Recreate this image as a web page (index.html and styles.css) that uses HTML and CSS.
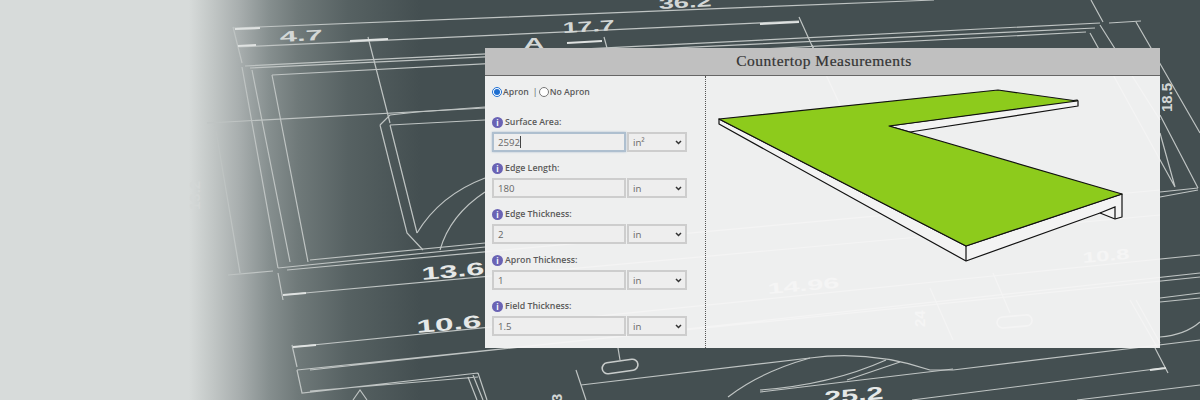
FILE: index.html
```html
<!DOCTYPE html>
<html lang="en">
<head>
    <meta charset="UTF-8">
    <meta name="viewport" content="width=device-width, initial-scale=1.0">
    <title>Countertop Measurements</title>
    <link rel="stylesheet" href="styles.css">
</head>
<body>
    <div class="hero">
        <!-- Blueprint drawing behind the panel -->
        <svg class="blueprint" viewBox="0 0 1200 400" aria-hidden="true">
            <defs>
                <linearGradient id="fade" gradientUnits="userSpaceOnUse" x1="0" y1="0" x2="420" y2="0">
                    <stop offset="0.45" stop-color="#d7dbda"/>
                    <stop offset="0.51" stop-color="#c0c5c4"/>
                    <stop offset="0.57" stop-color="#a8aeae"/>
                    <stop offset="0.64" stop-color="#868f8f"/>
                    <stop offset="0.71" stop-color="#6f7979"/>
                    <stop offset="0.83" stop-color="#566162"/>
                    <stop offset="1" stop-color="#444f51"/>
                </linearGradient>
            </defs>
            <rect class="bp-fade" width="420" height="400"/>

            <g class="bp-lines">
                <!-- top dimensions -->
                <path d="M233 28 L934 0 M238 47 L799 21 M233 27 L242 63 M799 17 L813 48"/>
                <path d="M368 37 L390 123 M604 37 L607 48 M1091 0 L1103 22 M1109 23 L1141 21"/>
                <!-- long top edge of the part -->
                <path d="M245 66 L1100 23 M250 68 L1095 28 M272 75 L1086 32"/>
                <path d="M1100 25 L1160 120 M1090 33 L1175 187 M1136 22 L1200 133 M1160 115 L1198 188 M1160 133 L1175 187"/>
                <path d="M1198 188 L1160 192 M1198 190 L1160 197"/>
                <!-- left side -->
                <path d="M242 67 L278 268 M252 70 L290 262 M272 75 L308 262"/>
                <path d="M207 123 L485 108 M215 125 L240 273 M228 275 L273 271"/>
                <!-- slot and curves -->
                <path d="M380 125 L407 233 L423 250 M390 125 L417 233 M380 125 L390 115 L417 112 L485 107 M390 125 L485 120"/>
                <path d="M417 233 Q440 195 485 178 M440 250 Q450 215 485 192"/>
                <!-- bottom edges and dimensions -->
                <path d="M278 268 L485 247 M310 260 L485 243 M287 270 L1160 190 M278 273 L283 300 M283 295 L1160 215"/>
                <path d="M292 345 L297 367 M293 347 L1200 255 M297 370 L1200 277 M310 370 L1200 273"/>
                <path d="M297 370 L302 393 L478 373 M310 391 L478 377 M468 377 L477 400 M473 375 L483 400 M478 373 L487 400 M353 400 L360 390 L367 400"/>
                <path d="M1160 298 L1200 293 M1160 302 L1200 298"/>
                <path d="M581 385 L810 358 Q870 350 930 370 L953 370 L1200 340 M576 370 L586 400 M618 348 L620 360"/>
                <path d="M728 397 Q760 372 810 358 M760 390 Q830 385 886 360 M847 380 L900 362 M760 392 L953 369 M912 400 L1163 368"/>
                <path d="M1160 337 Q1185 335 1200 322 M1155 348 L1168 373 M1077 400 L1200 385"/>
                <path class="bp-thick" d="M260 28 L235 29 M238 46 L256 45 M350 41 L388 39 M1150 370 L1166 368 M283 295 L306 293 M293 347 L316 345 M567 43 L602 41 M760 24 L799 22"/>
                <!-- only seen through the panel -->
                <path d="M812 45 L887 205 M930 288 L953 340 M993 273 L1010 313 M1130 300 L1157 347 M1136 300 L1160 343"/>
            </g>
            <rect class="bp-slot" x="602" y="361" width="36" height="11" rx="5.5" transform="rotate(-8 620 366)"/>
            <rect class="bp-slot" x="997" y="316" width="35" height="11" rx="5.5" transform="rotate(-5 1014 321)"/>

            <g class="bp-text">
                <text x="280" y="42" textLength="43" lengthAdjust="spacingAndGlyphs" transform="rotate(-3 280 42)">4.7</text>
                <text x="563" y="33" textLength="52" lengthAdjust="spacingAndGlyphs" transform="rotate(-3 563 33)">17.7</text>
                <text x="659" y="9" textLength="53" lengthAdjust="spacingAndGlyphs" transform="rotate(-3 659 9)">36.2</text>
                <text x="524" y="48" textLength="20" lengthAdjust="spacingAndGlyphs">A</text>
                <text x="422" y="280" class="bp-big" textLength="63" lengthAdjust="spacingAndGlyphs" transform="rotate(-5 422 280)">13.6</text>
                <text x="417" y="333" class="bp-big" textLength="65" lengthAdjust="spacingAndGlyphs" transform="rotate(-5 417 333)">10.6</text>
                <text x="825" y="404" class="bp-big" textLength="59" lengthAdjust="spacingAndGlyphs" transform="rotate(-5 825 404)">25.2</text>
                <text x="1172" y="112" transform="rotate(-90 1172 112)">18.5</text>
                <text x="562" y="402" transform="rotate(-90 562 402)">3</text>
                <text x="200" y="210" transform="rotate(-90 200 210)">13.2</text>
                <text x="768" y="294" textLength="72" lengthAdjust="spacingAndGlyphs" transform="rotate(-5 768 294)">14.96</text>
                <text x="1083" y="263" textLength="47" lengthAdjust="spacingAndGlyphs" transform="rotate(-5 1083 263)">10.8</text>
                <text x="925" y="327" transform="rotate(-90 925 327)">24</text>
                <text x="767" y="132" textLength="40" lengthAdjust="spacingAndGlyphs" transform="rotate(-5 767 132)">Ø2</text>
            </g>
        </svg>

        <div class="panel">
            <h2 class="panel-title">Countertop Measurements</h2>
            <div class="panel-body">
                <form class="fields">
                    <div class="apron">
                        <label><input type="radio" name="apron" checked> Apron</label>
                        <span class="sep">|</span>
                        <label><input type="radio" name="apron"> No Apron</label>
                    </div>

                    <div class="field">
                        <div class="field-label"><span class="info">i</span>Surface Area:</div>
                        <div class="field-row">
                            <input class="num num-active" type="text" value="2592">
                            <span class="caret"></span>
                            <select class="unit"><option>in²</option></select>
                        </div>
                    </div>
                    <div class="field">
                        <div class="field-label"><span class="info">i</span>Edge Length:</div>
                        <div class="field-row">
                            <input class="num" type="text" value="180">
                            <select class="unit"><option>in</option></select>
                        </div>
                    </div>
                    <div class="field">
                        <div class="field-label"><span class="info">i</span>Edge Thickness:</div>
                        <div class="field-row">
                            <input class="num" type="text" value="2">
                            <select class="unit"><option>in</option></select>
                        </div>
                    </div>
                    <div class="field">
                        <div class="field-label"><span class="info">i</span>Apron Thickness:</div>
                        <div class="field-row">
                            <input class="num" type="text" value="1">
                            <select class="unit"><option>in</option></select>
                        </div>
                    </div>
                    <div class="field">
                        <div class="field-label"><span class="info">i</span>Field Thickness:</div>
                        <div class="field-row">
                            <input class="num" type="text" value="1.5">
                            <select class="unit"><option>in</option></select>
                        </div>
                    </div>
                </form>

                <div class="preview">
                    <!-- viewBox is in page pixels so the points read off the layout directly -->
                    <svg class="counter" viewBox="706 76 454 272" aria-label="Countertop preview">
                        <path class="side" d="M719 119 L719 124 L966 261 L1100 213 L1115 219 L1122 217 L1122 194 L966 246 Z"/>
                        <path class="side" d="M1077 100 L1078 101 L1078 106 L910 132 L889 126 Z"/>
                        <path class="top" d="M719 119 L998 90 L1077 101 L889 126 L1122 194 L966 246 Z"/>
                        <path class="edge" d="M966 246 L966 261 M1100 213 L1115 207 L1115 219"/>
                    </svg>
                </div>
            </div>
        </div>
    </div>
</body>
</html>
```

FILE: styles.css
```css
* {
    box-sizing: border-box;
}

body {
    margin: 0;
    background: #444f51;
    font-family: "Open Sans", Arial, sans-serif;
    color: #555;
}

.hero {
    position: relative;
    width: 1200px;
    height: 400px;
    overflow: hidden;
    padding: 48px 40px 0 485px;
}

.blueprint {
    position: absolute;
    top: 0;
    left: 0;
    width: 1200px;
    height: 400px;
}

.bp-fade {
    fill: url(#fade);
}

.bp-lines {
    filter: blur(0.35px);
}

.bp-lines path {
    fill: none;
    stroke: #bfc4c3;
    stroke-width: 1.2;
}

.bp-lines .bp-thick {
    stroke: #dfe2e1;
    stroke-width: 2.2;
}

.bp-slot {
    fill: none;
    stroke: #c8cccb;
    stroke-width: 1.6;
}

.bp-text text {
    font-family: "Liberation Sans", Arial, sans-serif;
    font-weight: bold;
    font-size: 15px;
    fill: #d3d7d6;
}

.bp-text .bp-big {
    font-size: 18px;
    fill: #e6e8e7;
}

.panel {
    position: relative;
    width: 675px;
    height: 300px;
    background: rgba(246, 246, 246, 0.96);
}

.panel-title {
    margin: 0;
    height: 28px;
    padding-left: 3px;
    line-height: 26px;
    background: #c0c0c0;
    border-bottom: 1px solid #666;
    text-align: center;
    font-family: "Liberation Serif", serif;
    font-size: 15.5px;
    font-weight: normal;
    letter-spacing: 0.5px;
    color: #333;
    -webkit-text-stroke: 0.2px #333;
}

.panel-body {
    display: flex;
    height: 272px;
}

.fields {
    width: 221px;
    padding: 8px 17px 0 7px;
    border-right: 1px dotted #555;
}

.apron {
    display: flex;
    align-items: center;
    gap: 4px;
    height: 16px;
    margin-bottom: 15px;
    font-size: 8.7px;
    font-weight: 600;
    color: #5a5a5a;
}

.apron label {
    display: flex;
    align-items: center;
    gap: 1px;
}

.apron input {
    width: 10px;
    height: 10px;
    margin: 0;
    accent-color: #1f6fd0;
}

.sep {
    width: 2px;
    font-weight: 400;
}

.field {
    height: 46px;
}

.field-label {
    display: flex;
    align-items: center;
    gap: 2px;
    height: 14px;
    margin-bottom: 3px;
    font-size: 8.8px;
    font-weight: 600;
    color: #5a5a5a;
}

.info {
    width: 11px;
    height: 11px;
    border-radius: 50%;
    background: #6a63b4;
    color: #fff;
    font-size: 8px;
    font-weight: 700;
    line-height: 11px;
    text-align: center;
}

.field-row {
    position: relative;
    display: flex;
    gap: 1px;
}

.num,
.unit {
    height: 20px;
    border: 2px solid #cdcdcd;
    background-color: #eee;
    font-family: "Open Sans", Arial, sans-serif;
    font-size: 9.6px;
    color: #666;
}

.num {
    width: 134px;
    padding: 0 4px;
}

.num-active {
    border-color: #aebfcf;
    box-shadow: 0 0 2px #aebfcf;
}

.caret {
    position: absolute;
    top: 4px;
    left: 28px;
    width: 1px;
    height: 12px;
    background: #444;
}

.unit {
    width: 60px;
    padding: 0 4px;
    appearance: none;
    border-radius: 0;
    background-image: url("data:image/svg+xml,%3Csvg xmlns='http://www.w3.org/2000/svg' width='7' height='5'%3E%3Cpath d='M1 1l2.5 2.5L6 1' fill='none' stroke='%23333' stroke-width='1.5'/%3E%3C/svg%3E");
    background-repeat: no-repeat;
    background-position: right 3px center;
}

.preview {
    flex: 1;
    min-width: 0;
}

.counter {
    display: block;
    width: 454px;
    height: 272px;
}

.top {
    fill: #8dcb1c;
    stroke: #111;
    stroke-width: 1.2;
    stroke-linejoin: round;
}

.side {
    fill: #f3f3f3;
    stroke: #111;
    stroke-width: 1.2;
    stroke-linejoin: round;
}

.edge {
    fill: none;
    stroke: #111;
    stroke-width: 1.2;
}
```
